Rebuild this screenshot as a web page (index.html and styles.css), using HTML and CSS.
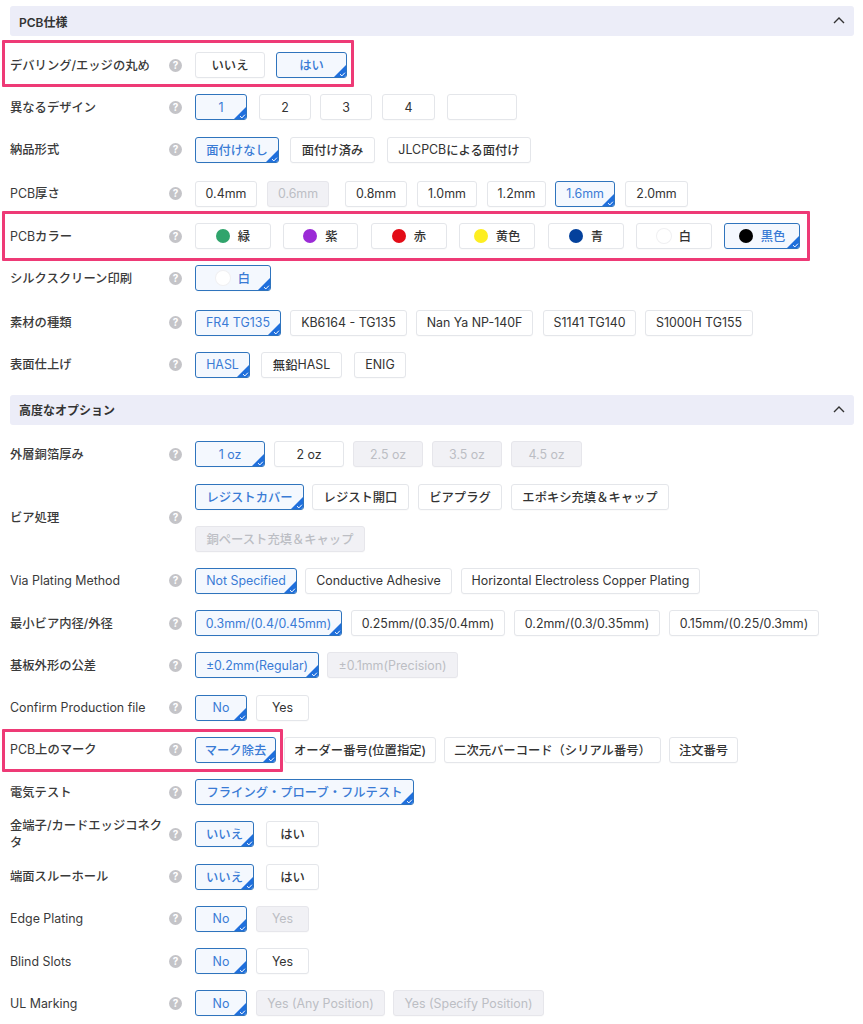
FILE: index.html
```html
<!DOCTYPE html>
<html lang="ja">
<head>
<meta charset="utf-8">
<title>PCB仕様</title>
<link rel="stylesheet" href="styles.css">
</head>
<body>
<main class="form">
  <section class="group">
    <header class="group-head"><h2>PCB仕様</h2><svg class="chev" width="14" height="8" viewBox="0 0 14 8"><path d="M2 7 L7 2 L12 7" fill="none" stroke="#333" stroke-width="1.4"/></svg></header>
    <div class="rows first">
      <div class="row"><span class="hl hl-a"></span><label>デバリング/エッジの丸め</label><i class="help">?</i><div class="opts"><button class="w70">いいえ</button><button class="w71 g11 on">はい<svg class="tick" viewBox="0 0 14 14"><path d="M14 0V14H0Z" fill="#1f6fdc"/><path d="M7 10.2l1.9 1.7 3-3.2" fill="none" stroke="#fff" stroke-width="1"/></svg></button></div></div>
      <div class="row"><label>異なるデザイン</label><i class="help">?</i><div class="opts"><button class="w52 on en">1<svg class="tick" viewBox="0 0 14 14"><path d="M14 0V14H0Z" fill="#1f6fdc"/><path d="M7 10.2l1.9 1.7 3-3.2" fill="none" stroke="#fff" stroke-width="1"/></svg></button><button class="w52 g12 en">2</button><button class="w52 g9 en">3</button><button class="w53 g10 en">4</button><button class="w70 g12"></button></div></div>
      <div class="row"><label>納品形式</label><i class="help">?</i><div class="opts"><button class="w84 on">面付けなし<svg class="tick" viewBox="0 0 14 14"><path d="M14 0V14H0Z" fill="#1f6fdc"/><path d="M7 10.2l1.9 1.7 3-3.2" fill="none" stroke="#fff" stroke-width="1"/></svg></button><button class="w85 g11">面付け済み</button><button class="w144 g12"><span class="en">JLCPCB</span>による面付け</button></div></div>
      <div class="row extra"><label><span class="en">PCB</span>厚さ</label><i class="help">?</i><div class="opts"><button class="w62 en">0.4mm</button><button class="w62 g10 off en">0.6mm</button><button class="w62 g16 en">0.8mm</button><button class="w60 g10 en">1.0mm</button><button class="w59 g10 en">1.2mm</button><button class="w60 g9 on en">1.6mm<svg class="tick" viewBox="0 0 14 14"><path d="M14 0V14H0Z" fill="#1f6fdc"/><path d="M7 10.2l1.9 1.7 3-3.2" fill="none" stroke="#fff" stroke-width="1"/></svg></button><button class="w63 g10 en">2.0mm</button></div></div>
      <div class="row"><span class="hl hl-b"></span><label><span class="en">PCB</span>カラー</label><i class="help">?</i><div class="opts"><button class="w76"><b class="dot green"></b>緑</button><button class="w75 g12"><b class="dot purple"></b>紫</button><button class="w76 g13"><b class="dot red"></b>赤</button><button class="w76 g12"><b class="dot yellow"></b>黄色</button><button class="w76 g13"><b class="dot blue"></b>青</button><button class="w76 g12"><b class="dot white"></b>白</button><button class="w76 g12 on"><b class="dot black"></b>黒色<svg class="tick" viewBox="0 0 14 14"><path d="M14 0V14H0Z" fill="#1f6fdc"/><path d="M7 10.2l1.9 1.7 3-3.2" fill="none" stroke="#fff" stroke-width="1"/></svg></button></div></div>
      <div class="row"><label>シルクスクリーン印刷</label><i class="help">?</i><div class="opts"><button class="w76 on"><b class="dot white"></b>白<svg class="tick" viewBox="0 0 14 14"><path d="M14 0V14H0Z" fill="#1f6fdc"/><path d="M7 10.2l1.9 1.7 3-3.2" fill="none" stroke="#fff" stroke-width="1"/></svg></button></div></div>
      <div class="row extra"><label>素材の種類</label><i class="help">?</i><div class="opts"><button class="w86 on en">FR4 TG135<svg class="tick" viewBox="0 0 14 14"><path d="M14 0V14H0Z" fill="#1f6fdc"/><path d="M7 10.2l1.9 1.7 3-3.2" fill="none" stroke="#fff" stroke-width="1"/></svg></button><button class="w117 g9 en">KB6164 - TG135</button><button class="w117 g9 en">Nan Ya NP-140F</button><button class="w93 g10 en">S1141 TG140</button><button class="w108 g9 en">S1000H TG155</button></div></div>
      <div class="row"><label>表面仕上げ</label><i class="help">?</i><div class="opts"><button class="w55 on en">HASL<svg class="tick" viewBox="0 0 14 14"><path d="M14 0V14H0Z" fill="#1f6fdc"/><path d="M7 10.2l1.9 1.7 3-3.2" fill="none" stroke="#fff" stroke-width="1"/></svg></button><button class="w81 g11">無鉛<span class="en">HASL</span></button><button class="w52 g12 en">ENIG</button></div></div>
    </div>
  </section>
  <section class="group second">
    <header class="group-head"><h2>高度なオプション</h2><svg class="chev" width="14" height="8" viewBox="0 0 14 8"><path d="M2 7 L7 2 L12 7" fill="none" stroke="#333" stroke-width="1.4"/></svg></header>
    <div class="rows">
      <div class="row"><label>外層銅箔厚み</label><i class="help">?</i><div class="opts"><button class="w70 on en">1 oz<svg class="tick" viewBox="0 0 14 14"><path d="M14 0V14H0Z" fill="#1f6fdc"/><path d="M7 10.2l1.9 1.7 3-3.2" fill="none" stroke="#fff" stroke-width="1"/></svg></button><button class="w70 g9 en">2 oz</button><button class="w70 g9 off en">2.5 oz</button><button class="w70 g9 off en">3.5 oz</button><button class="w71 g9 off en">4.5 oz</button></div></div>
      <div class="row"><label>ビア処理</label><i class="help">?</i><div class="opts wrap"><button class="w109 on">レジストカバー<svg class="tick" viewBox="0 0 14 14"><path d="M14 0V14H0Z" fill="#1f6fdc"/><path d="M7 10.2l1.9 1.7 3-3.2" fill="none" stroke="#fff" stroke-width="1"/></svg></button><button class="w97 g8">レジスト開口</button><button class="w84 g9">ビアプラグ</button><button class="w158 g9">エポキシ充填＆キャップ</button><button class="w170 off">銅ペースト充填＆キャップ</button></div></div>
      <div class="row"><label class="en">Via Plating Method</label><i class="help">?</i><div class="opts"><button class="w102 on en">Not Specified<svg class="tick" viewBox="0 0 14 14"><path d="M14 0V14H0Z" fill="#1f6fdc"/><path d="M7 10.2l1.9 1.7 3-3.2" fill="none" stroke="#fff" stroke-width="1"/></svg></button><button class="w147 g8 en">Conductive Adhesive</button><button class="w239 g9 en">Horizontal Electroless Copper Plating</button></div></div>
      <div class="row"><label>最小ビア内径/外径</label><i class="help">?</i><div class="opts"><button class="w147 on en">0.3mm/(0.4/0.45mm)<svg class="tick" viewBox="0 0 14 14"><path d="M14 0V14H0Z" fill="#1f6fdc"/><path d="M7 10.2l1.9 1.7 3-3.2" fill="none" stroke="#fff" stroke-width="1"/></svg></button><button class="w154 g9 en">0.25mm/(0.35/0.4mm)</button><button class="w146 g9 en">0.2mm/(0.3/0.35mm)</button><button class="w150 g9 en">0.15mm/(0.25/0.3mm)</button></div></div>
      <div class="row"><label>基板外形の公差</label><i class="help">?</i><div class="opts"><button class="w124 on en">±0.2mm(Regular)<svg class="tick" viewBox="0 0 14 14"><path d="M14 0V14H0Z" fill="#1f6fdc"/><path d="M7 10.2l1.9 1.7 3-3.2" fill="none" stroke="#fff" stroke-width="1"/></svg></button><button class="w131 g8 off en">±0.1mm(Precision)</button></div></div>
      <div class="row"><label class="en">Confirm Production file</label><i class="help">?</i><div class="opts"><button class="w52 on en">No<svg class="tick" viewBox="0 0 14 14"><path d="M14 0V14H0Z" fill="#1f6fdc"/><path d="M7 10.2l1.9 1.7 3-3.2" fill="none" stroke="#fff" stroke-width="1"/></svg></button><button class="w53 g9 en">Yes</button></div></div>
      <div class="row"><span class="hl hl-c"></span><label><span class="en">PCB</span>上のマーク</label><i class="help">?</i><div class="opts"><button class="w81 on">マーク除去<svg class="tick" viewBox="0 0 14 14"><path d="M14 0V14H0Z" fill="#1f6fdc"/><path d="M7 10.2l1.9 1.7 3-3.2" fill="none" stroke="#fff" stroke-width="1"/></svg></button><button class="w152 g8">オーダー番号(位置指定)</button><button class="w217 g8">二次元バーコード（シリアル番号）</button><button class="w69 g8">注文番号</button></div></div>
      <div class="row"><label>電気テスト</label><i class="help">?</i><div class="opts"><button class="w219 on">フライング・プローブ・フルテスト<svg class="tick" viewBox="0 0 14 14"><path d="M14 0V14H0Z" fill="#1f6fdc"/><path d="M7 10.2l1.9 1.7 3-3.2" fill="none" stroke="#fff" stroke-width="1"/></svg></button></div></div>
      <div class="row"><label>金端子/カードエッジコネクタ</label><i class="help">?</i><div class="opts"><button class="w59 on">いいえ<svg class="tick" viewBox="0 0 14 14"><path d="M14 0V14H0Z" fill="#1f6fdc"/><path d="M7 10.2l1.9 1.7 3-3.2" fill="none" stroke="#fff" stroke-width="1"/></svg></button><button class="w53 g12">はい</button></div></div>
      <div class="row"><label>端面スルーホール</label><i class="help">?</i><div class="opts"><button class="w59 on">いいえ<svg class="tick" viewBox="0 0 14 14"><path d="M14 0V14H0Z" fill="#1f6fdc"/><path d="M7 10.2l1.9 1.7 3-3.2" fill="none" stroke="#fff" stroke-width="1"/></svg></button><button class="w53 g12">はい</button></div></div>
      <div class="row"><label class="en">Edge Plating</label><i class="help">?</i><div class="opts"><button class="w52 on en">No<svg class="tick" viewBox="0 0 14 14"><path d="M14 0V14H0Z" fill="#1f6fdc"/><path d="M7 10.2l1.9 1.7 3-3.2" fill="none" stroke="#fff" stroke-width="1"/></svg></button><button class="w53 g9 off en">Yes</button></div></div>
      <div class="row"><label class="en">Blind Slots</label><i class="help">?</i><div class="opts"><button class="w52 on en">No<svg class="tick" viewBox="0 0 14 14"><path d="M14 0V14H0Z" fill="#1f6fdc"/><path d="M7 10.2l1.9 1.7 3-3.2" fill="none" stroke="#fff" stroke-width="1"/></svg></button><button class="w53 g9 en">Yes</button></div></div>
      <div class="row"><label class="en">UL Marking</label><i class="help">?</i><div class="opts"><button class="w52 on en">No<svg class="tick" viewBox="0 0 14 14"><path d="M14 0V14H0Z" fill="#1f6fdc"/><path d="M7 10.2l1.9 1.7 3-3.2" fill="none" stroke="#fff" stroke-width="1"/></svg></button><button class="w129 g9 off en">Yes (Any Position)</button><button class="w151 g8 off en">Yes (Specify Position)</button></div></div>
    </div>
  </section>
</main>
</body>
</html>
```

FILE: styles.css
```css
* { box-sizing: border-box; }
html, body { margin: 0; padding: 0; background: #fff; }
body {
  font-family: Inter, "Noto Sans CJK JP", sans-serif;
  font-size: 12.3px;
  color: #333;
  height: 1024px;
  overflow: hidden;
}
.form { padding: 6px 9px 0 10px; }
.group-head {
  height: 30px;
  background: #ecedf8;
  border-radius: 3px;
  padding: 0 9px;
  display: flex;
  align-items: center;
  justify-content: space-between;
}
.group-head h2 { margin: 0; font-size: 12px; font-weight: 600; color: #333; }
.chev { margin-right: -1px; margin-top: -2px; }
.second { margin-top: 17px; }
.rows { display: flex; flex-direction: column; gap: 16.25px; padding-top: 16px; }
.second .rows { padding-top: 16.5px; }
.row { position: relative; display: flex; align-items: center; min-height: 26px; }
.row.extra { margin-top: 2px; }
.row label { width: 158px; margin: -4px 0; font-size: 12.3px; font-weight: 500; line-height: 17px; color: #3a3a3a; flex: none; padding-right: 4px; }
.help {
  flex: none;
  width: 13px;
  height: 13px;
  margin-left: 1px;
  margin-right: 13px;
  border-radius: 50%;
  background: #c4c4c8;
  color: #fff;
  font: normal 700 10px/13px Inter, sans-serif;
  text-align: center;
}
.opts { display: flex; align-items: center; }
.opts.wrap { flex-wrap: wrap; width: 480px; row-gap: 16px; }
button {
  position: relative;
  flex: none;
  height: 26px;
  padding: 0;
  font: inherit;
  font-weight: 500;
  color: #333;
  background: #fff;
  border: 1px solid #e4e6ea;
  border-radius: 3px;
  box-shadow: 0 1px 1px rgba(0, 0, 0, .02);
  display: inline-flex;
  align-items: center;
  justify-content: center;
  overflow: hidden;
}
button.on { color: #3a7bd5; background: #f4f8fe; border-color: #2f74bd; }
button.off { color: #bcbec4; background: #f1f1f5; border-color: #e6e6eb; }
.en, .row label.en { font-weight: 400; font-size: 12.4px; }
.tick { position: absolute; right: -1px; bottom: -1px; width: 14px; height: 14px; }
.dot { width: 14px; height: 14px; border-radius: 50%; margin-right: 8px; flex: none; }
.green { background: #30a46c; }
.purple { background: #9b2bd6; }
.red { background: #e30c17; }
.yellow { background: #fdee21; }
.blue { background: #04419c; }
.white { background: #fff; box-shadow: 0 0 0 1px #f0f0f2; }
.black { background: #000; }
.hl { position: absolute; border: 3px solid #ee3a76; border-radius: 1px; pointer-events: none; }
.hl-a { left: -8px; top: -12px; width: 352px; height: 47px; }
.hl-b { left: -8px; top: -12px; width: 808px; height: 50px; }
.hl-c { left: -8px; top: -8px; width: 281px; height: 43px; }
.g8 { margin-left: 8px; } .g9 { margin-left: 9px; } .g10 { margin-left: 10px; }
.g11 { margin-left: 11px; } .g12 { margin-left: 12px; } .g13 { margin-left: 13px; } .g16 { margin-left: 16px; }
.w52 { width: 52px; } .w53 { width: 53px; } .w55 { width: 55px; } .w59 { width: 59px; }
.w60 { width: 60px; } .w62 { width: 62px; } .w63 { width: 63px; } .w69 { width: 69px; }
.w70 { width: 70px; } .w71 { width: 71px; } .w75 { width: 75px; } .w76 { width: 76px; }
.w81 { width: 81px; } .w84 { width: 84px; } .w85 { width: 85px; } .w86 { width: 86px; }
.w93 { width: 93px; } .w97 { width: 97px; } .w102 { width: 102px; } .w108 { width: 108px; }
.w109 { width: 109px; } .w117 { width: 117px; } .w124 { width: 124px; } .w129 { width: 129px; }
.w131 { width: 131px; } .w144 { width: 144px; } .w146 { width: 146px; } .w147 { width: 147px; }
.w150 { width: 150px; } .w151 { width: 151px; } .w152 { width: 152px; } .w154 { width: 154px; }
.w158 { width: 158px; } .w170 { width: 170px; } .w217 { width: 217px; } .w219 { width: 219px; }
.w239 { width: 239px; }
```
